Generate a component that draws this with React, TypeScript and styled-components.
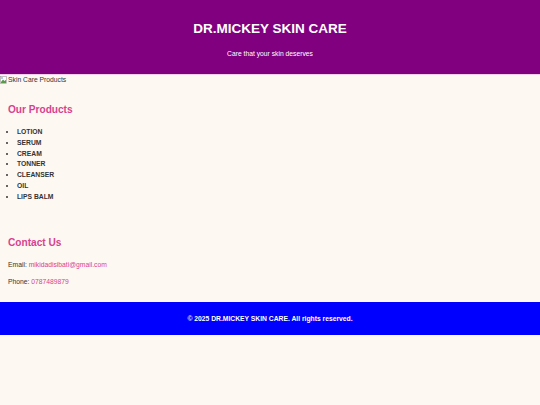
import React from "react";
import styled, { createGlobalStyle } from "styled-components";

const GlobalStyle = createGlobalStyle`
    html {
        font-size: 6.75px;
    }
    body {
        margin: 0;
        background-color: #fef8f3;
        font-family: "Liberation Sans", Arial, sans-serif;
        color: #333;
    }
`;

const Header = styled.header`
    background-color: #800080;
    color: white;
    text-align: center;
    padding: 20.5px 0 16px;
    border-bottom: 1px solid #f2cfe9;
`;

const Title = styled.h1`
    margin: 0;
    font-size: 2rem;
    line-height: 15.5px;
`;

const Tagline = styled.p`
    margin: 14px 0 0;
    font-size: 1rem;
    line-height: 8px;
`;

const Banner = styled.div`
    display: flex;
    align-items: center;
    gap: 1px;
    height: 9px;
    font-size: 1rem;
    color: #333;
`;

const Section = styled.section`
    padding: 0 8px;
`;

const SectionTitle = styled.h2<{ top: number }>`
    margin: ${({ top }) => top}px 0 0;
    font-size: 1.5rem;
    line-height: 12px;
    color: #d6428f;
`;

const ProductList = styled.ul`
    margin: 11px 0 0;
    padding-left: 9px;
    font-size: 1rem;
    line-height: 10.8px;
    font-weight: bold;
    list-style: disc;
`;

const ContactLine = styled.p`
    margin: 0;
    font-size: 1rem;
    line-height: 10.8px;
    & + & {
        margin-top: 6.5px;
    }
    &:first-of-type {
        margin-top: 11px;
    }
`;

const Link = styled.a`
    color: #d6428f;
    text-decoration: none;
`;

const Footer = styled.footer`
    margin-top: 14px;
    background-color: #0000ff;
    color: white;
    text-align: center;
    font-size: 1rem;
    font-weight: bold;
    height: 33px;
    display: flex;
    align-items: center;
    justify-content: center;
`;

const BrokenImage = () => (
    <svg width="7" height="8" viewBox="0 0 7 8">
        <rect x="0.5" y="0.5" width="6" height="7" fill="#fff" stroke="#999" strokeWidth="0.6" />
        <path d="M1 6 L3 3.5 L4.5 5 L6 3.8 L6 7 L1 7 Z" fill="#5a9a4a" />
        <circle cx="2" cy="2" r="0.8" fill="#4a90d9" />
    </svg>
);

const products = ["LOTION", "SERUM", "CREAM", "TONNER", "CLEANSER", "OIL", "LIPS BALM"];

const App: React.FC = () => {
    return (
        <>
            <GlobalStyle />
            <Header>
                <Title>DR.MICKEY SKIN CARE</Title>
                <Tagline>Care that your skin deserves</Tagline>
            </Header>

            <Banner>
                <BrokenImage />
                <span>Skin Care Products</span>
            </Banner>

            <Section>
                <SectionTitle top={20}>Our Products</SectionTitle>
                <ProductList>
                    {products.map((p) => (
                        <li key={p}>{p}</li>
                    ))}
                </ProductList>
            </Section>

            <Section>
                <SectionTitle top={34}>Contact Us</SectionTitle>
                <ContactLine>
                    Email: <Link href="#">mikidadisibati@gmail.com</Link>
                </ContactLine>
                <ContactLine>
                    Phone: <Link href="#">0787489879</Link>
                </ContactLine>
            </Section>

            <Footer>© 2025 DR.MICKEY SKIN CARE. All rights reserved.</Footer>
        </>
    );
};

export default App;
